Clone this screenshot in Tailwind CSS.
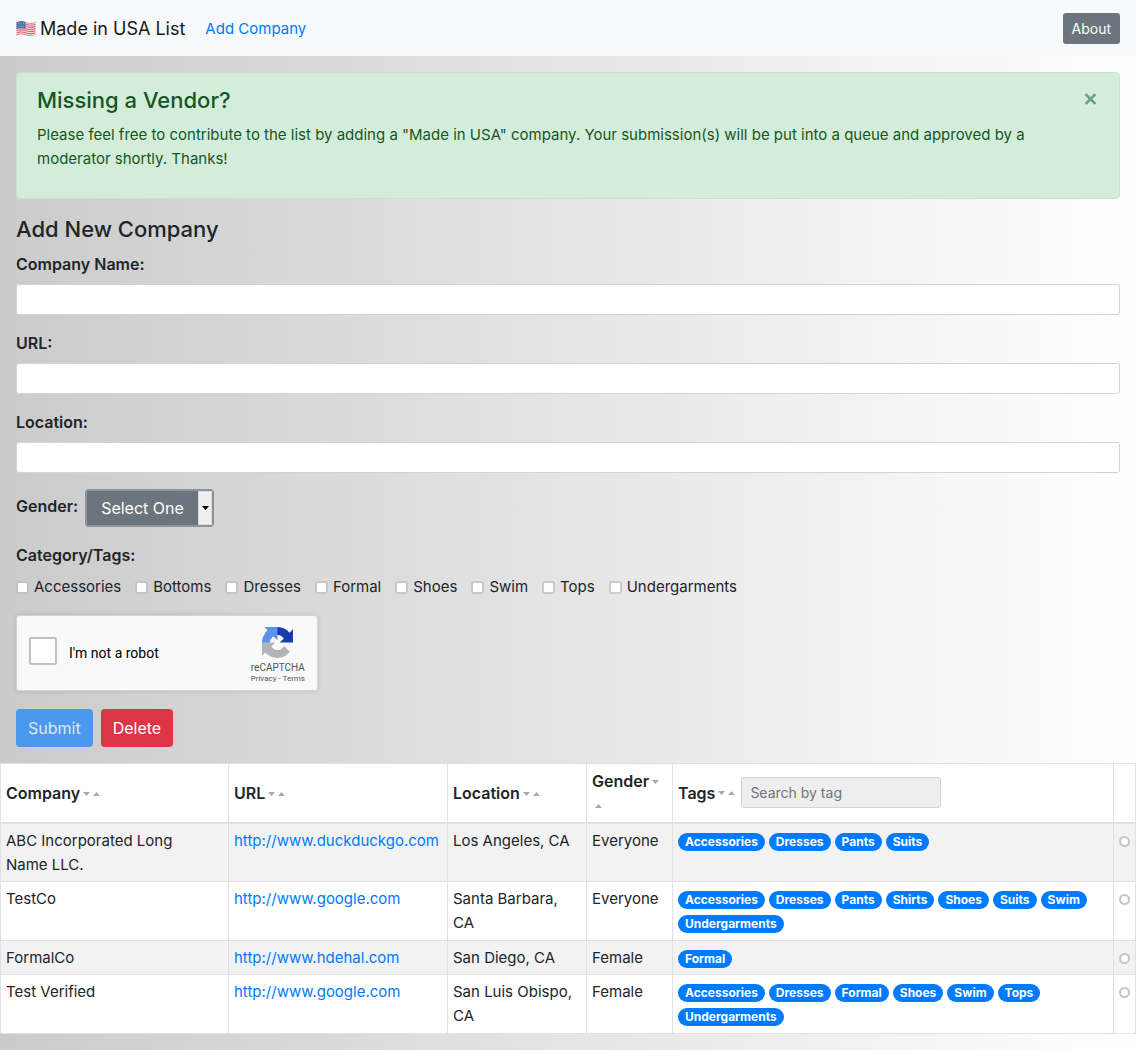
<!DOCTYPE html>
<html lang="en">
<head>
<meta charset="utf-8">
<meta name="viewport" content="width=device-width, initial-scale=1">
<title>Made in USA List</title>
<script src="https://cdn.jsdelivr.net/npm/@tailwindcss/browser@4"></script>
</head>
<body class="min-h-screen bg-linear-to-r from-[#cbcbcb] to-white font-['Inter',sans-serif] text-[15px] leading-6 text-[#212529]">

<nav class="flex h-14 items-center bg-[#f8f9fa] px-4 pt-px">
  <a href="#" class="mr-5 flex items-center gap-1 text-lg text-[#16181b]">
    <svg class="h-5 w-5" viewBox="0 0 20 20" aria-hidden="true">
      <clipPath id="flag"><path d="M.5 3.6C4 1.8 7 2.200 10 3.300s6 1.500 9.500-.5v12.600c-3.500 1.800-6.500 1.800-9.500.8s-6-1.500-9.500.5z"/></clipPath>
      <g clip-path="url(#flag)">
        <path fill="#f0dfe2" d="M0 0h20v20H0z"/>
        <g fill="none" stroke="#dc6472" stroke-width="1.100">
          <path d="M0 3.600c4-2 7-1.200 10-.2s6 1.400 10-.5"/>
          <path d="M0 5.700c4-2 7-1.200 10-.2s6 1.400 10-.5"/>
          <path d="M0 7.800c4-2 7-1.200 10-.2s6 1.400 10-.5"/>
          <path d="M0 9.900c4-2 7-1.200 10-.2s6 1.400 10-.5"/>
          <path d="M0 12c4-2 7-1.200 10-.2s6 1.400 10-.5"/>
          <path d="M0 14.100c4-2 7-1.200 10-.2s6 1.400 10-.5"/>
          <path d="M0 16.200c4-2 7-1.200 10-.2s6 1.400 10-.5"/>
        </g>
        <path fill="#4a76ad" d="M0 1h9.500v9C6 8.800 3 9 0 10.500z"/>
        <g fill="#9db8d8"><circle cx="2.500" cy="4.500" r=".5"/><circle cx="5" cy="4" r=".5"/><circle cx="7.500" cy="4.400" r=".5"/><circle cx="3.700" cy="6.200" r=".5"/><circle cx="6.200" cy="6.200" r=".5"/><circle cx="2.500" cy="8" r=".5"/><circle cx="5" cy="7.700" r=".5"/><circle cx="7.500" cy="8" r=".5"/></g>
      </g>
    </svg>
    <span>Made in USA List</span>
  </a>
  <a href="#" class="text-[#007bff]">Add Company</a>
  <button type="button" class="ml-auto h-[31px] rounded-[3px] bg-[#6c757d] px-[9px] text-sm text-white">About</button>
</nav>

<main>
  <div class="px-4 pt-4">
    <div role="alert" class="flex items-start justify-between rounded border border-[#c3e6cb] bg-[#d4edda] px-5 pt-[13px] pb-[27px] text-[#155724]">
      <div>
        <h2 class="mb-2 text-[22px] leading-[29px] font-medium">Missing a Vendor?</h2>
        <p>Please feel free to contribute to the list by adding a "Made in USA" company. Your submission(s) will be put into a queue and approved by a moderator shortly. Thanks!</p>
      </div>
      <button type="button" aria-label="Close" class="mt-[7px] mr-[2px] ml-8 shrink-0">
        <svg class="h-[13px] w-[13px]" viewBox="0 0 12 12"><path d="M1.500 2.200l9 9M10.500 2.200l-9 9" stroke="#fff" stroke-opacity=".6" stroke-width="2.600"/><path d="M1.500 1.200l9 9M10.500 1.200l-9 9" stroke="#6fa07f" stroke-width="2.600"/></svg>
      </button>
    </div>

    <form class="pt-4 pb-4">
      <h2 class="mb-2 text-[22px] leading-[29px] font-medium">Add New Company</h2>
      <div class="mb-4 flex flex-col gap-2">
        <label for="name" class="text-base font-semibold">Company Name:</label>
        <input id="name" type="text" class="h-[31px] w-full rounded-[3px] border border-[#ced4da] bg-white px-2 text-sm">
      </div>
      <div class="mb-4 flex flex-col gap-2">
        <label for="url" class="text-base font-semibold">URL:</label>
        <input id="url" type="text" class="h-[31px] w-full rounded-[3px] border border-[#ced4da] bg-white px-2 text-sm">
      </div>
      <div class="mb-4 flex flex-col gap-2">
        <label for="location" class="text-base font-semibold">Location:</label>
        <input id="location" type="text" class="h-[31px] w-full rounded-[3px] border border-[#ced4da] bg-white px-2 text-sm">
      </div>
      <div class="mb-4 flex items-start gap-[7px]">
        <label for="gender" class="pt-[5px] text-base font-semibold">Gender:</label>
        <div class="relative">
          <select id="gender" class="block h-[38px] w-[129px] appearance-none rounded border-2 border-[#8c939a] bg-[#6c757d] pl-[14px] text-base text-white">
            <option>Select One</option>
            <option>Everyone</option>
            <option>Female</option>
            <option>Male</option>
          </select>
          <span class="pointer-events-none absolute top-[2px] right-[2px] flex h-[34px] w-[14px] items-center justify-center border border-[#dcdcdc] bg-[#efefef]">
            <svg class="h-1 w-[7px]" viewBox="0 0 7 4"><path d="M0 0h7L3.500 4z"/></svg>
          </span>
        </div>
      </div>
      <fieldset class="mb-4">
        <legend class="mb-2 text-base font-semibold">Category/Tags:</legend>
        <div class="flex flex-wrap gap-x-[14px]">
          <label class="flex items-center gap-[5px]"><input type="checkbox" class="h-[13px] w-[13px] appearance-none rounded-[3px] border-2 border-[#bdbdbd]/70 bg-white bg-clip-padding checked:bg-[#007bff]">Accessories</label>
          <label class="flex items-center gap-[5px]"><input type="checkbox" class="h-[13px] w-[13px] appearance-none rounded-[3px] border-2 border-[#bdbdbd]/70 bg-white bg-clip-padding checked:bg-[#007bff]">Bottoms</label>
          <label class="flex items-center gap-[5px]"><input type="checkbox" class="h-[13px] w-[13px] appearance-none rounded-[3px] border-2 border-[#bdbdbd]/70 bg-white bg-clip-padding checked:bg-[#007bff]">Dresses</label>
          <label class="flex items-center gap-[5px]"><input type="checkbox" class="h-[13px] w-[13px] appearance-none rounded-[3px] border-2 border-[#bdbdbd]/70 bg-white bg-clip-padding checked:bg-[#007bff]">Formal</label>
          <label class="flex items-center gap-[5px]"><input type="checkbox" class="h-[13px] w-[13px] appearance-none rounded-[3px] border-2 border-[#bdbdbd]/70 bg-white bg-clip-padding checked:bg-[#007bff]">Shoes</label>
          <label class="flex items-center gap-[5px]"><input type="checkbox" class="h-[13px] w-[13px] appearance-none rounded-[3px] border-2 border-[#bdbdbd]/70 bg-white bg-clip-padding checked:bg-[#007bff]">Swim</label>
          <label class="flex items-center gap-[5px]"><input type="checkbox" class="h-[13px] w-[13px] appearance-none rounded-[3px] border-2 border-[#bdbdbd]/70 bg-white bg-clip-padding checked:bg-[#007bff]">Tops</label>
          <label class="flex items-center gap-[5px]"><input type="checkbox" class="h-[13px] w-[13px] appearance-none rounded-[3px] border-2 border-[#bdbdbd]/70 bg-white bg-clip-padding checked:bg-[#007bff]">Undergarments</label>
        </div>
      </fieldset>
      <div class="mb-[18px] flex h-19 w-[302px] items-center justify-between rounded-[3px] border border-[#d3d3d3] bg-[#f9f9f9] px-3 font-['Roboto',sans-serif] shadow-[0_0_4px_1px_rgba(0,0,0,0.08)]">
        <label class="flex items-center gap-3 pb-1 text-sm leading-[17px] text-black"><input type="checkbox" class="h-7 w-7 appearance-none rounded-[2px] border-2 border-[#c1c1c1] bg-white checked:bg-[#4a90e2]"><span class="pt-1">I'm not a robot</span></label>
        <div class="flex flex-col items-center pt-1 text-[#555]">
          <svg class="h-[31px] w-[31px]" viewBox="0 0 64 64" aria-hidden="true">
            <path fill="#1c3aa9" d="M64 31.955l-.033-1.370V4.687l-7.160 7.160C50.948 4.674 42.033.093 32.050.093c-10.390 0-19.622 4.960-25.460 12.640l11.736 11.860a15.550 15.550 0 0 1 4.754-5.334c2.050-1.600 4.952-2.906 8.968-2.906.485 0 .860.057 1.135.163 4.976.393 9.288 3.140 11.828 7.124l-8.307 8.307L64 31.953"/>
            <path fill="#5a92ee" d="M31.862.094l-1.370.033H4.594l7.160 7.160C4.580 13.147 0 22.060 0 32.046c0 10.390 4.960 19.622 12.640 25.460L24.500 45.770a15.550 15.550 0 0 1-5.334-4.754c-1.600-2.050-2.906-4.952-2.906-8.968 0-.485.057-.860.163-1.135.393-4.976 3.140-9.288 7.124-11.828l8.307 8.307L31.860.095"/>
            <path fill="#b3b3b3" d="M.001 32.045l.033 1.370v25.898l7.160-7.160c5.860 7.173 14.774 11.754 24.760 11.754 10.390 0 19.622-4.960 25.460-12.640L45.678 39.407a15.550 15.550 0 0 1-4.754 5.334c-2.050 1.600-4.952 2.906-8.968 2.906-.485 0-.860-.057-1.135-.163-4.976-.393-9.288-3.140-11.828-7.124l8.307-8.307L.001 32.047"/>
          </svg>
          <span class="mt-1 text-[10px] leading-3">reCAPTCHA</span>
          <span class="text-[8px] leading-[10px]"><a href="#">Privacy</a> - <a href="#">Terms</a></span>
        </div>
      </div>
      <div class="flex gap-2">
        <button type="submit" disabled class="h-[38px] rounded bg-[#4a99ee] px-3 text-base text-[#e0e6ec]">Submit</button>
        <button type="button" class="h-[38px] rounded bg-[#dc3545] px-3 text-base text-white">Delete</button>
      </div>
    </form>
  </div>

  <table class="w-full table-fixed border-collapse bg-white [&_td]:border [&_td]:border-[#dee2e6] [&_td]:p-[5px] [&_td]:align-top [&_th]:border [&_th]:border-b-2 [&_th]:border-[#dee2e6] [&_th]:px-[5px] [&_th]:text-left [&_th]:text-base [&_th]:font-semibold">
    <colgroup>
      <col class="w-[228px]"><col class="w-[219px]"><col class="w-[139px]"><col class="w-[86px]"><col><col class="w-[22px]">
    </colgroup>
    <thead>
      <tr class="h-[59px]">
        <th scope="col">Company<svg class="ml-[3px] inline h-1 w-[7px]" viewBox="0 0 7 4" fill="#aaa"><path d="M0 0h7L3.500 4z"/></svg><svg class="ml-[3px] inline h-1 w-[7px]" viewBox="0 0 7 4" fill="#aaa"><path d="M0 4h7L3.500 0z"/></svg></th>
        <th scope="col">URL<svg class="ml-[3px] inline h-1 w-[7px]" viewBox="0 0 7 4" fill="#aaa"><path d="M0 0h7L3.500 4z"/></svg><svg class="ml-[3px] inline h-1 w-[7px]" viewBox="0 0 7 4" fill="#aaa"><path d="M0 4h7L3.500 0z"/></svg></th>
        <th scope="col">Location<svg class="ml-[3px] inline h-1 w-[7px]" viewBox="0 0 7 4" fill="#aaa"><path d="M0 0h7L3.500 4z"/></svg><svg class="ml-[3px] inline h-1 w-[7px]" viewBox="0 0 7 4" fill="#aaa"><path d="M0 4h7L3.500 0z"/></svg></th>
        <th scope="col">Gender<svg class="ml-[3px] inline h-1 w-[7px]" viewBox="0 0 7 4" fill="#aaa"><path d="M0 0h7L3.500 4z"/></svg> <svg class="ml-[3px] inline h-1 w-[7px]" viewBox="0 0 7 4" fill="#aaa"><path d="M0 4h7L3.500 0z"/></svg></th>
        <th scope="col">
          <div class="flex items-center">Tags<svg class="ml-[3px] h-1 w-[7px]" viewBox="0 0 7 4" fill="#aaa"><path d="M0 0h7L3.500 4z"/></svg><svg class="ml-[3px] h-1 w-[7px]" viewBox="0 0 7 4" fill="#aaa"><path d="M0 4h7L3.500 0z"/></svg>
          <input type="text" aria-label="Search by tag" placeholder="Search by tag" class="ml-[6px] h-[31px] w-[200px] rounded-[3px] border border-[#ced4da] bg-[#eee] px-2 text-sm font-normal placeholder:text-[#6c757d]"></div>
        </th>
        <th scope="col"></th>
      </tr>
    </thead>
    <tbody class="[&_li]:rounded-full [&_li]:bg-[#007bff] [&_li]:px-[7px] [&_li]:text-xs [&_li]:leading-[18px] [&_li]:font-bold [&_li]:text-white [&_ul]:flex [&_ul]:flex-wrap [&_ul]:gap-x-1 [&_ul]:gap-y-[6px] [&_ul]:pt-1 [&>tr:nth-child(odd)>td]:pb-1 [&>tr:nth-child(odd)]:bg-[#f2f2f2] [&>tr>td:first-child]:pr-8 [&>tr:nth-child(even)]:bg-white">
      <tr>
        <td>ABC Incorporated Long Name LLC.</td>
        <td><a href="#" class="text-[#007bff]">http://www.duckduckgo.com</a></td>
        <td>Los Angeles, CA</td>
        <td>Everyone</td>
        <td><ul><li>Accessories</li><li>Dresses</li><li>Pants</li><li>Suits</li></ul></td>
        <td><input type="radio" name="row" aria-label="Select ABC Incorporated Long Name LLC." class="mt-[7px] block h-[11px] w-[11px] appearance-none rounded-full border-2 border-[#c4c4c4] bg-white checked:bg-[#007bff]"></td>
      </tr>
      <tr>
        <td>TestCo</td>
        <td><a href="#" class="text-[#007bff]">http://www.google.com</a></td>
        <td>Santa Barbara, CA</td>
        <td>Everyone</td>
        <td><ul><li>Accessories</li><li>Dresses</li><li>Pants</li><li>Shirts</li><li>Shoes</li><li>Suits</li><li>Swim</li><li>Undergarments</li></ul></td>
        <td><input type="radio" name="row" aria-label="Select TestCo" class="mt-[7px] block h-[11px] w-[11px] appearance-none rounded-full border-2 border-[#c4c4c4] bg-white checked:bg-[#007bff]"></td>
      </tr>
      <tr>
        <td>FormalCo</td>
        <td><a href="#" class="text-[#007bff]">http://www.hdehal.com</a></td>
        <td>San Diego, CA</td>
        <td>Female</td>
        <td><ul><li>Formal</li></ul></td>
        <td><input type="radio" name="row" aria-label="Select FormalCo" class="mt-[7px] block h-[11px] w-[11px] appearance-none rounded-full border-2 border-[#c4c4c4] bg-white checked:bg-[#007bff]"></td>
      </tr>
      <tr>
        <td>Test Verified</td>
        <td><a href="#" class="text-[#007bff]">http://www.google.com</a></td>
        <td>San Luis Obispo, CA</td>
        <td>Female</td>
        <td><ul><li>Accessories</li><li>Dresses</li><li>Formal</li><li>Shoes</li><li>Swim</li><li>Tops</li><li>Undergarments</li></ul></td>
        <td><input type="radio" name="row" aria-label="Select Test Verified" class="mt-[7px] block h-[11px] w-[11px] appearance-none rounded-full border-2 border-[#c4c4c4] bg-white checked:bg-[#007bff]"></td>
      </tr>
    </tbody>
  </table>
</main>
</body>
</html>
